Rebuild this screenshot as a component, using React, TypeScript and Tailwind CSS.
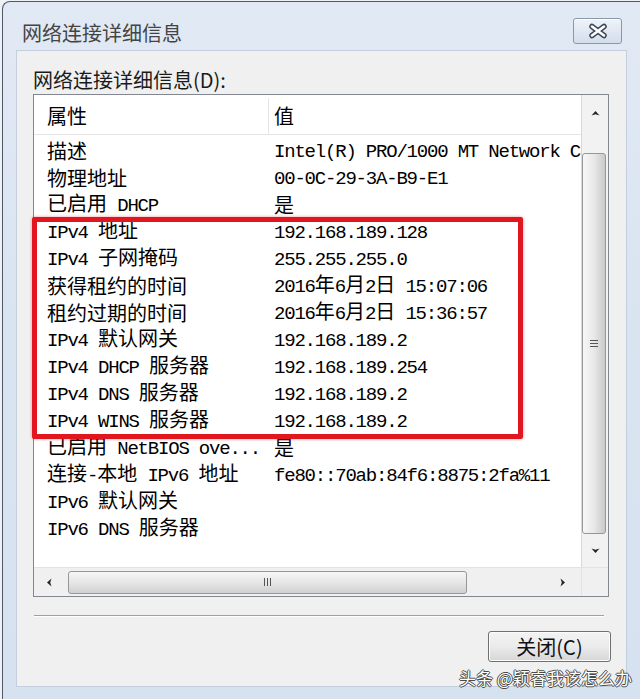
// 网络连接详细信息对话框（Win7 风格）
// 标题栏 + 属性/值列表 + 滚动条 + 关闭按钮，红框圈出 IPv4 相关行

const cjk = "font-['Noto_Sans_CJK_SC',sans-serif]";
const mono = "font-['Liberation_Mono','Noto_Sans_CJK_SC',monospace] text-[19px] tracking-[-1.2px]";

const rows: [string, string][] = [
  ["描述", "Intel(R) PRO/1000 MT Network Connection"],
  ["物理地址", "00-0C-29-3A-B9-E1"],
  ["已启用 DHCP", "是"],
  ["IPv4 地址", "192.168.189.128"],
  ["IPv4 子网掩码", "255.255.255.0"],
  ["获得租约的时间", "2016年6月2日 15:07:06"],
  ["租约过期的时间", "2016年6月2日 15:36:57"],
  ["IPv4 默认网关", "192.168.189.2"],
  ["IPv4 DHCP 服务器", "192.168.189.254"],
  ["IPv4 DNS 服务器", "192.168.189.2"],
  ["IPv4 WINS 服务器", "192.168.189.2"],
  ["已启用 NetBIOS ove...", "是"],
  ["连接-本地 IPv6 地址", "fe80::70ab:84f6:8875:2fa%11"],
  ["IPv6 默认网关", ""],
  ["IPv6 DNS 服务器", ""],
];

// 半角字符用等宽字体，全角字符保持 20px
function Txt({ s }: { s: string }) {
  const parts = s.match(/[\x00-\x7f]+|[^\x00-\x7f]+/g) ?? [];
  return (
    <>
      {parts.map((p, i) =>
        /^[\x00-\x7f]/.test(p) ? (
          <span key={i} className={mono}>
            {p}
          </span>
        ) : (
          <span key={i}>{p}</span>
        )
      )}
    </>
  );
}

// 滚动条箭头（凹底箭头）
function Arrow({ dir }: { dir: "up" | "down" | "left" | "right" }) {
  const rot = { up: 0, down: 180, left: 270, right: 90 }[dir];
  return (
    <svg width="9" height="9" viewBox="0 0 9 9">
      <g transform={`rotate(${rot} 4.5 4.5)`}>
        <path d="M0.5 6.5 L4.5 2 L8.5 6.5 L4.5 5.2 Z" fill="#222" />
      </g>
    </svg>
  );
}

function CloseIcon() {
  return (
    <svg width="20" height="16" viewBox="0 0 20 16">
      <g strokeLinecap="round">
        <path d="M4 3.5 L16 12.5 M4 12.5 L16 3.5" stroke="#3d4654" strokeWidth="5.5" />
        <path d="M4 3.5 L16 12.5 M4 12.5 L16 3.5" stroke="#ffffff" strokeWidth="2.6" />
      </g>
    </svg>
  );
}

export default function App() {
  return (
    <div className={`relative w-[640px] h-[699px] overflow-hidden bg-[#eef2f7] pl-[2px] pt-[1px] ${cjk}`}>
      <div className="h-[698px] border-l border-t border-[#4f5866] rounded-tl-[8px] bg-linear-to-b from-[#e1e9f4] via-[#d9e4f1] to-[#d6e2f0]">
        {/* 标题栏 */}
        <div className="h-[48px] flex items-start justify-between pl-[19px] pr-[18px] pt-[16px]">
          <span className="mt-[2px] text-[20px] leading-[26px] text-[#444]">网络连接详细信息</span>
          <button className="w-[49px] h-[26px] rounded-[3px] border border-[#8a97a8] bg-linear-to-b from-[#eef3f9] to-[#d3deeb] shadow-[inset_0_1px_0_#ffffff] flex items-center justify-center">
            <CloseIcon />
          </button>
        </div>

        {/* 客户区 */}
        <div className="ml-[13px] w-[611px] h-[637px] border border-[#c3cfdd] bg-[#f0f0f0] flex flex-col">
          <div className="ml-[16px] mt-[17px] text-[20px] leading-[24px] text-[#1a1a1a]">网络连接详细信息(D):</div>

          {/* 列表 */}
          <div className="ml-[16px] mt-[2px] w-[576px] h-[503px] border border-[#828790] bg-white grid grid-cols-[547px_27px] grid-rows-[472px_29px]">
            <div className="overflow-hidden flex flex-col text-[20px] text-black">
              <div className="h-[40px] shrink-0 flex border-b border-[#e5e5e5] pt-[3px]">
                <div className="w-[235px] shrink-0 pl-[13px] border-r border-[#e5e5e5] flex items-center">属性</div>
                <div className="pl-[5px] flex items-center">值</div>
              </div>
              <div className="pt-[2px]">
                {rows.map(([k, v]) => (
                  <div key={k} className="h-[27px] flex items-center whitespace-nowrap leading-[24px]">
                    <div className="w-[235px] shrink-0 pl-[13px]">
                      <Txt s={k} />
                    </div>
                    <div className="pl-[5px]">
                      <Txt s={v} />
                    </div>
                  </div>
                ))}
              </div>
            </div>

            {/* 竖向滚动条 */}
            <div className="bg-[#f2f2f2] border-l border-[#d9d9d9] flex flex-col">
              <div className="h-[36px] flex items-center justify-center">
                <Arrow dir="up" />
              </div>
              <div className="h-[22px]" />
              <div className="h-[381px] w-[24px] rounded-[3px] border border-[#979797] bg-linear-to-r from-[#f7f7f7] via-[#e8e8e8] to-[#c9c9c9] flex flex-col items-center justify-center gap-[2px]">
                <div className="w-[8px] h-px bg-[#555]" />
                <div className="w-[8px] h-px bg-[#555]" />
                <div className="w-[8px] h-px bg-[#555]" />
              </div>
              <div className="flex-1 flex items-center justify-center">
                <Arrow dir="down" />
              </div>
            </div>

            {/* 横向滚动条 */}
            <div className="bg-[#f0f0f0] border-t border-[#e3e3e3] flex items-center">
              <div className="w-[30px] flex justify-center">
                <Arrow dir="left" />
              </div>
              <div className="ml-[4px] w-[399px] h-[23px] rounded-[3px] border border-[#979797] bg-linear-to-b from-[#f6f6f6] via-[#e6e6e6] to-[#d0d0d0] flex items-center justify-center gap-[2px]">
                <div className="w-px h-[8px] bg-[#555]" />
                <div className="w-px h-[8px] bg-[#555]" />
                <div className="w-px h-[8px] bg-[#555]" />
              </div>
              <div className="flex-1" />
              <div className="w-[38px] flex justify-center">
                <Arrow dir="right" />
              </div>
            </div>
            <div className="bg-[#f0f0f0] border-t border-l border-[#e3e3e3]" />
          </div>

          {/* 分隔线 */}
          <div className="ml-[17px] mt-[18px] w-[570px] border-t border-[#a0a0a0] border-b border-b-white" />

          {/* 关闭按钮 */}
          <div className="flex justify-end mt-[14px] pr-[15px]">
            <button className="w-[123px] h-[31px] rounded-[3px] border border-[#707070] bg-linear-to-b from-[#f3f3f3] via-[#ebebeb] to-[#d6d6d6] shadow-[inset_0_0_0_1px_#fcfcfc] text-[20px] leading-[26px] text-[#111]">
              关闭(C)
            </button>
          </div>
        </div>
      </div>

      {/* 红色标注框 */}
      <div className="absolute left-[32px] top-[217px] w-[491px] h-[222px] border-[5px] border-[#e2161e] rounded-[2px] shadow-[0_0_3px_rgba(226,22,30,0.5)]" />

      {/* 水印 */}
      <div className="absolute left-[459px] top-[666px] text-[17px] leading-[24px] text-white [text-shadow:1px_0_#4a4a4a,-1px_0_#4a4a4a,0_1px_#4a4a4a,0_-1px_#4a4a4a]">
        头条 @颖睿我该怎么办
      </div>
    </div>
  );
}
